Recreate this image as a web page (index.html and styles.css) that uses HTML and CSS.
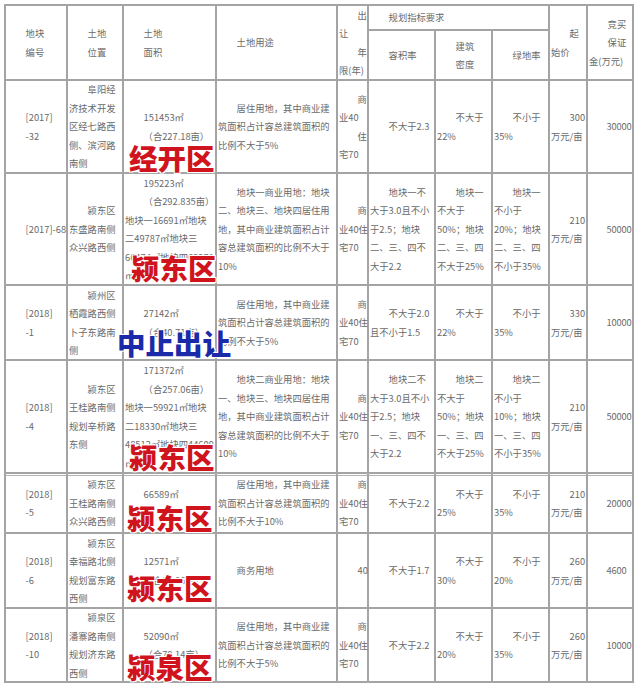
FILE: index.html
```html
<!DOCTYPE html>
<html lang="zh-CN">
<head>
<meta charset="utf-8">
<title>地块出让表</title>
<link rel="stylesheet" href="styles.css">
</head>
<body>
<div class="page">
  <div class="sheet">
    <div class="cell rs2"><div class="p">地块</div><div class="p">编号</div></div>
    <div class="cell rs2"><div class="p">土地</div><div class="p">位置</div></div>
    <div class="cell rs2"><div class="p">土地</div><div class="p">面积</div></div>
    <div class="cell rs2"><div class="p">土地用途</div></div>
    <div class="cell rs2"><div class="p">出</div><div>让</div><div class="p">年</div><div>限(年)</div></div>
    <div class="cell cs3"><div class="p">规划指标要求</div></div>
    <div class="cell rs2"><div class="p">起</div><div>始价</div></div>
    <div class="cell rs2"><div class="p">竞买</div><div class="p">保证</div><div>金(万元)</div></div>
    <div class="cell"><div class="p">容积率</div></div>
    <div class="cell"><div class="p">建筑</div><div class="p">密度</div></div>
    <div class="cell"><div class="p">绿地率</div></div>

    <div class="cell"><div class="p">[2017]</div><div class="p">-32</div></div>
    <div class="cell"><div class="p">阜阳经</div><div>济技术开发</div><div>区经七路西</div><div>侧、滨河路</div><div>南侧</div></div>
    <div class="cell"><div class="p">151453㎡</div><div class="p">（合227.18亩）</div></div>
    <div class="cell"><div class="p">居住用地，其中商业建</div><div>筑面积占计容总建筑面积的</div><div>比例不大于5%</div></div>
    <div class="cell"><div class="p">商</div><div>业40</div><div class="p">住</div><div>宅70</div></div>
    <div class="cell"><div class="p">不大于2.3</div></div>
    <div class="cell"><div class="p">不大于</div><div>22%</div></div>
    <div class="cell"><div class="p">不小于</div><div>35%</div></div>
    <div class="cell"><div class="p">300</div><div>万元/亩</div></div>
    <div class="cell"><div class="p">30000</div></div>

    <div class="cell"><div class="p">[2017]-68</div></div>
    <div class="cell"><div class="p">颍东区</div><div>东盛路南侧</div><div>众兴路西侧</div></div>
    <div class="cell"><div class="p">195223㎡</div><div class="p">（合292.835亩）</div><div>地块一16691㎡地块</div><div>二49787㎡地块三</div><div>66474㎡地块四62271</div><div>㎡</div></div>
    <div class="cell"><div class="p">地块一商业用地：地块</div><div>二、地块三、地块四居住用</div><div>地，其中商业建筑面积占计</div><div>容总建筑面积的比例不大于</div><div>10%</div></div>
    <div class="cell"><div class="p">商</div><div>业40住</div><div>宅70</div></div>
    <div class="cell"><div class="p">地块一不</div><div>大于3.0且不小</div><div>于2.5；地块</div><div>二、三、四不</div><div>大于2.2</div></div>
    <div class="cell"><div class="p">地块一</div><div>不大于</div><div>50%；地块</div><div>二、三、四</div><div>不大于25%</div></div>
    <div class="cell"><div class="p">地块一</div><div>不小于</div><div>20%；地块</div><div>二、三、四</div><div>不小于35%</div></div>
    <div class="cell"><div class="p">210</div><div>万元/亩</div></div>
    <div class="cell"><div class="p">50000</div></div>

    <div class="cell"><div class="p">[2018]</div><div class="p">-1</div></div>
    <div class="cell"><div class="p">颍州区</div><div>栖霞路西侧</div><div>卜子东路南</div><div>侧</div></div>
    <div class="cell"><div class="p">27142㎡</div><div class="p">（合40.71亩）</div></div>
    <div class="cell"><div class="p">居住用地，其中商业建</div><div>筑面积占计容总建筑面积的</div><div>比例不大于5%</div></div>
    <div class="cell"><div class="p">商</div><div>业40住</div><div>宅70</div></div>
    <div class="cell"><div class="p">不大于2.0</div><div>且不小于1.5</div></div>
    <div class="cell"><div class="p">不大于</div><div>22%</div></div>
    <div class="cell"><div class="p">不小于</div><div>35%</div></div>
    <div class="cell"><div class="p">330</div><div>万元/亩</div></div>
    <div class="cell"><div class="p">10000</div></div>

    <div class="cell"><div class="p">[2018]</div><div class="p">-4</div></div>
    <div class="cell"><div class="p">颍东区</div><div>王桂路南侧</div><div>规划辛桥路</div><div>东侧</div></div>
    <div class="cell"><div class="p">171372㎡</div><div class="p">（合257.06亩）</div><div>地块一59921㎡地块</div><div>二18330㎡地块三</div><div>48512㎡地块四44609</div><div>㎡</div></div>
    <div class="cell"><div class="p">地块二商业用地：地块</div><div>一、地块三、地块四居住用</div><div>地，其中商业建筑面积占计</div><div>容总建筑面积的比例不大于</div><div>10%</div></div>
    <div class="cell"><div class="p">商</div><div>业40住</div><div>宅70</div></div>
    <div class="cell"><div class="p">地块二不</div><div>大于3.0且不小</div><div>于2.5；地块</div><div>一、三、四不</div><div>大于2.2</div></div>
    <div class="cell"><div class="p">地块二</div><div>不大于</div><div>50%；地块</div><div>一、三、四</div><div>不大于25%</div></div>
    <div class="cell"><div class="p">地块二</div><div>不小于</div><div>10%；地块</div><div>一、三、四</div><div>不小于35%</div></div>
    <div class="cell"><div class="p">210</div><div>万元/亩</div></div>
    <div class="cell"><div class="p">50000</div></div>

    <div class="cell seam"><div class="p">[2018]</div><div class="p">-5</div></div>
    <div class="cell seam"><div class="p">颍东区</div><div>王桂路南侧</div><div>众兴路西侧</div></div>
    <div class="cell seam"><div class="p">66589㎡</div><div class="blank">&nbsp;</div></div>
    <div class="cell seam"><div class="p">居住用地，其中商业建</div><div>筑面积占计容总建筑面积的</div><div>比例不大于10%</div></div>
    <div class="cell seam"><div class="p">商</div><div>业40住</div><div>宅70</div></div>
    <div class="cell seam"><div class="p">不大于2.2</div></div>
    <div class="cell seam"><div class="p">不大于</div><div>25%</div></div>
    <div class="cell seam"><div class="p">不小于</div><div>35%</div></div>
    <div class="cell seam"><div class="p">210</div><div>万元/亩</div></div>
    <div class="cell seam"><div class="p">20000</div></div>

    <div class="cell"><div class="p">[2018]</div><div class="p">-6</div></div>
    <div class="cell"><div class="p">颍东区</div><div>幸福路北侧</div><div>规划富东路</div><div>西侧</div></div>
    <div class="cell"><div class="p">12571㎡</div><div class="p">（合18.86亩）</div></div>
    <div class="cell"><div class="p">商务用地</div></div>
    <div class="cell"><div class="p">40</div></div>
    <div class="cell"><div class="p">不大于1.7</div></div>
    <div class="cell"><div class="p">不大于</div><div>30%</div></div>
    <div class="cell"><div class="p">不小于</div><div>20%</div></div>
    <div class="cell"><div class="p">260</div><div>万元/亩</div></div>
    <div class="cell"><div class="p">4600</div></div>

    <div class="cell"><div class="p">[2018]</div><div class="p">-10</div></div>
    <div class="cell"><div class="p">颍泉区</div><div>潘寨路南侧</div><div>规划济东路</div><div>西侧</div></div>
    <div class="cell"><div class="p">52090㎡</div><div class="p">（合78.14亩）</div></div>
    <div class="cell"><div class="p">居住用地，其中商业建</div><div>筑面积占计容总建筑面积的</div><div>比例不大于5%</div></div>
    <div class="cell"><div class="p">商</div><div>业40住</div><div>宅70</div></div>
    <div class="cell"><div class="p">不大于2.2</div></div>
    <div class="cell"><div class="p">不大于</div><div>20%</div></div>
    <div class="cell"><div class="p">不小于</div><div>35%</div></div>
    <div class="cell"><div class="p">260</div><div>万元/亩</div></div>
    <div class="cell"><div class="p">10000</div></div>
  </div>

  <div class="stamp red s1">经开区</div>
  <div class="stamp red s2">颍东区</div>
  <div class="stamp blue s3">中止出让</div>
  <div class="stamp red s4">颍东区</div>
  <div class="stamp red s5">颍东区</div>
  <div class="stamp red s6">颍东区</div>
  <div class="stamp red s7">颍泉区</div>
</div>
</body>
</html>
```

FILE: styles.css
```css
html, body {
  margin: 0;
  background: #ffffff;
}

.page {
  position: relative;
  width: 640px;
  height: 687px;
  padding: 4px 0 0 4px;
  box-sizing: border-box;
  overflow: hidden;
}

.sheet {
  display: grid;
  grid-template-columns: 62px 56px 93px 121px 31px 67px 57px 57px 38px 46px;
  grid-template-rows: 25px 50px 93px 112px 75px 113px 60px 75px 74px;
  width: 630px;
  box-sizing: border-box;
  border-left: 2px solid #a4a4a4;
  border-top: 2px solid #a4a4a4;
  font-family: "Noto Sans CJK SC", "Noto Sans", sans-serif;
  font-size: 9.3px;
  line-height: 18.5px;
  color: #6a6a6a;
}

.cell {
  box-sizing: border-box;
  border-right: 2px solid #a4a4a4;
  border-bottom: 2px solid #a4a4a4;
  display: flex;
  flex-direction: column;
  justify-content: center;
  padding-left: 1px;
  white-space: nowrap;
  min-width: 0;
}

/* last column of data rows: numbers sit a little further left */
.cell:nth-child(10n+21) {
  padding-left: 0;
  letter-spacing: -0.2px;
}

.seam {
  box-shadow: inset 0 1px 0 #ffffff, inset 0 2px 0 #b4b4b4;
}

.rs2 { grid-row: span 2; }
.cs3 { grid-column: span 3; }

.p { text-indent: 2em; }

.stamp {
  position: absolute;
  font-family: "Noto Sans CJK SC", sans-serif;
  font-weight: 900;
  font-size: 28.5px;
  line-height: 28px;
  white-space: nowrap;
  text-shadow: 1px 1px 0 #fff, -1px -1px 0 #fff, 1px -1px 0 #fff, -1px 1px 0 #fff, 0 0 2px #fff;
}

.red { color: #d0141d; }
.blue { color: #1b2aa8; }

.s1 { left: 129px; top: 144px; }
.s2 { left: 131px; top: 254px; }
.s3 { left: 117px; top: 329px; }
.s4 { left: 129px; top: 443px; }
.s5 { left: 127px; top: 504px; }
.s6 { left: 127px; top: 574px; }
.s7 { left: 127px; top: 653px; }
```
